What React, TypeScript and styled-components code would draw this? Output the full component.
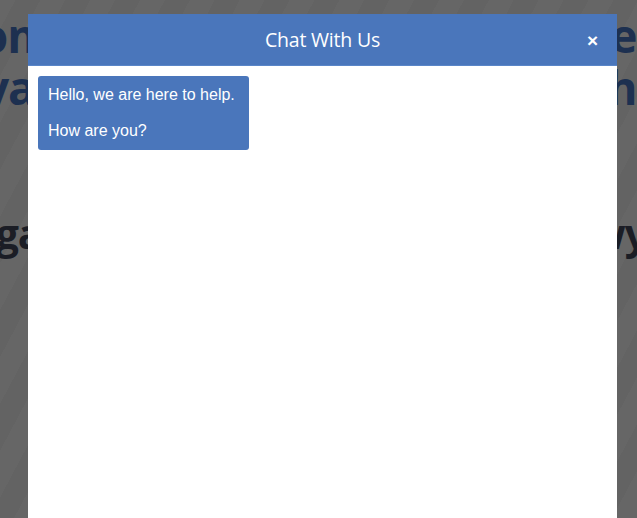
import React from "react";
import styled, { createGlobalStyle } from "styled-components";

const Global = createGlobalStyle`
  html, body { margin: 0; padding: 0; }
  body {
    background: #ffffff;
    font-family: "Liberation Sans", Arial, sans-serif;
    overflow: hidden;
    width: 637px;
    height: 518px;
  }
`;

const Page = styled.div`
  position: relative;
  width: 637px;
  height: 518px;
  overflow: hidden;
  background: repeating-linear-gradient(
    -62deg,
    #ffffff 0px,
    #ffffff 22px,
    #f7f7f7 22px,
    #f7f7f7 44px
  );
`;

const Hero = styled.section`
  display: flex;
  flex-direction: column;
  padding-top: 9px;
`;

const HeroLine = styled.div<{ $size: number; $lh: number; $color: string; $mt?: number }>`
  display: flex;
  justify-content: center;
  white-space: nowrap;
  font-family: "Open Sans", "Noto Sans", sans-serif;
  font-weight: 700;
  letter-spacing: -1px;
  font-size: ${(p) => p.$size}px;
  line-height: ${(p) => p.$lh}px;
  color: ${(p) => p.$color};
  margin-top: ${(p) => p.$mt ?? 0}px;
`;

const Overlay = styled.div`
  position: absolute;
  inset: 0;
  background: rgba(0, 0, 0, 0.6);
`;

const Modal = styled.div`
  position: absolute;
  left: 28px;
  top: 14px;
  width: 589px;
  height: 540px;
  background: #ffffff;
  display: flex;
  flex-direction: column;
`;

const Header = styled.header`
  height: 51px;
  background: #4a76bb;
  border-bottom: 1px solid #5a86c8;
  display: flex;
  align-items: center;
  justify-content: center;
  position: relative;
`;

const Title = styled.h2`
  margin: 0;
  font-family: "Open Sans", "Noto Sans", sans-serif;
  font-weight: 400;
  font-size: 19.5px;
  color: #ffffff;
  letter-spacing: -0.2px;
`;

const Close = styled.button`
  position: absolute;
  right: 19px;
  top: 50%;
  transform: translateY(-50%);
  background: none;
  border: 0;
  padding: 0;
  color: #ffffff;
  font-family: "Liberation Sans", Arial, sans-serif;
  font-size: 19px;
  font-weight: 700;
  line-height: 1;
  cursor: pointer;
`;

const Body = styled.div`
  flex: 1;
  padding: 10px;
  display: flex;
  flex-direction: column;
  align-items: flex-start;
`;

const Bubble = styled.div`
  background: #4a76bb;
  color: #ffffff;
  border-radius: 3px;
  padding: 10px 14px 10px 10px;
  font-size: 16px;
  line-height: 18px;
`;

const Line = styled.p`
  margin: 0;
  & + & { margin-top: 18px; }
`;

export default function App() {
  return (
    <>
      <Global />
      <Page>
        <Hero>
          <HeroLine $size={46} $lh={52} $color="#4a78c8">
            Welcome to your Customers Center now
          </HeroLine>
          <HeroLine $size={46} $lh={52} $color="#4a78c8">
            Always available to chat with a team here 24 / 7!
          </HeroLine>
          <HeroLine $size={41} $lh={46} $color="#444a5e" $mt={97}>
            Tagalog support from the local lawyer
          </HeroLine>
        </Hero>
        <Overlay />
        <Modal>
          <Header>
            <Title>Chat With Us</Title>
            <Close aria-label="Close">×</Close>
          </Header>
          <Body>
            <Bubble>
              <Line>Hello, we are here to help.</Line>
              <Line>How are you?</Line>
            </Bubble>
          </Body>
        </Modal>
      </Page>
    </>
  );
}
